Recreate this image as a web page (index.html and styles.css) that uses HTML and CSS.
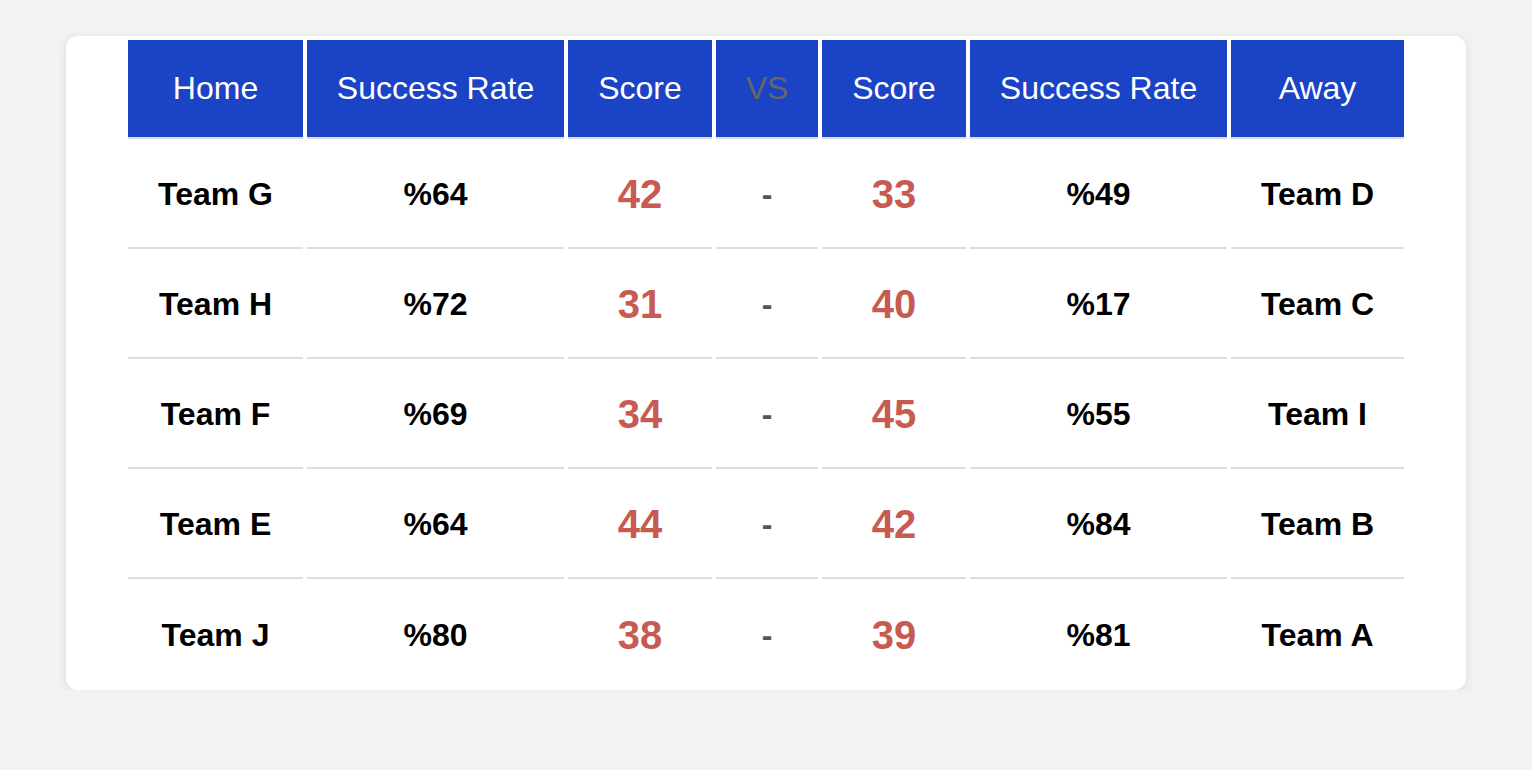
FILE: index.html
```html
<!DOCTYPE html>
<html lang="en">
<head>
<meta charset="utf-8">
<title>Matches</title>
<link rel="stylesheet" href="styles.css">
</head>
<body>
<div class="card">
  <table class="matches">
    <colgroup>
      <col class="c-team-h"><col class="c-rate"><col class="c-score"><col class="c-vs"><col class="c-score"><col class="c-rate"><col class="c-team-a">
    </colgroup>
    <thead>
      <tr>
        <th>Home</th><th>Success Rate</th><th>Score</th><th class="vs">VS</th><th>Score</th><th>Success Rate</th><th>Away</th>
      </tr>
    </thead>
    <tbody>
      <tr><td>Team G</td><td>%64</td><td class="score">42</td><td class="dash">-</td><td class="score">33</td><td>%49</td><td>Team D</td></tr>
      <tr><td>Team H</td><td>%72</td><td class="score">31</td><td class="dash">-</td><td class="score">40</td><td>%17</td><td>Team C</td></tr>
      <tr><td>Team F</td><td>%69</td><td class="score">34</td><td class="dash">-</td><td class="score">45</td><td>%55</td><td>Team I</td></tr>
      <tr><td>Team E</td><td>%64</td><td class="score">44</td><td class="dash">-</td><td class="score">42</td><td>%84</td><td>Team B</td></tr>
      <tr><td>Team J</td><td>%80</td><td class="score">38</td><td class="dash">-</td><td class="score">39</td><td>%81</td><td>Team A</td></tr>
    </tbody>
  </table>
</div>
</body>
</html>
```
FILE: styles.css
```css
html, body {
  margin: 0;
  padding: 0;
}
body {
  background: #f2f2f2;
  font-family: "Liberation Sans", Arial, Helvetica, sans-serif;
  padding-top: 36px;
}
.card {
  width: 1400px;
  margin: 0 auto;
  background: #ffffff;
  border-radius: 12px;
  box-shadow: 0 2px 10px rgba(0, 0, 0, 0.1);
  padding: 4px 0 1px;
  box-sizing: border-box;
}
.matches {
  table-layout: fixed;
  border-collapse: separate;
  border-spacing: 4px 0;
  width: 1284px;
  margin: 0 auto;
}
.c-team-h { width: 175px; }
.c-rate { width: 257px; }
.c-score { width: 144px; }
.c-vs { width: 102px; }
.c-team-a { width: 173px; }

.matches th {
  background: #1b43c5;
  color: #ffffff;
  font-weight: normal;
  font-size: 32px;
  height: 97px;
  padding: 0;
  text-align: center;
  vertical-align: middle;
  border-bottom: 2px solid #dddddd;
}
.matches th.vs {
  color: #666666;
}
.matches td {
  height: 110px;
  padding: 2px 0 0;
  box-sizing: border-box;
  text-align: center;
  vertical-align: middle;
  font-weight: bold;
  font-size: 32px;
  color: #000000;
  border-bottom: 2px solid #dddddd;
}
.matches tbody tr:last-child td {
  border-bottom: none;
}
.matches td.score {
  color: #c75a51;
  font-size: 40px;
}
.matches td.dash {
  color: #555555;
}
```
